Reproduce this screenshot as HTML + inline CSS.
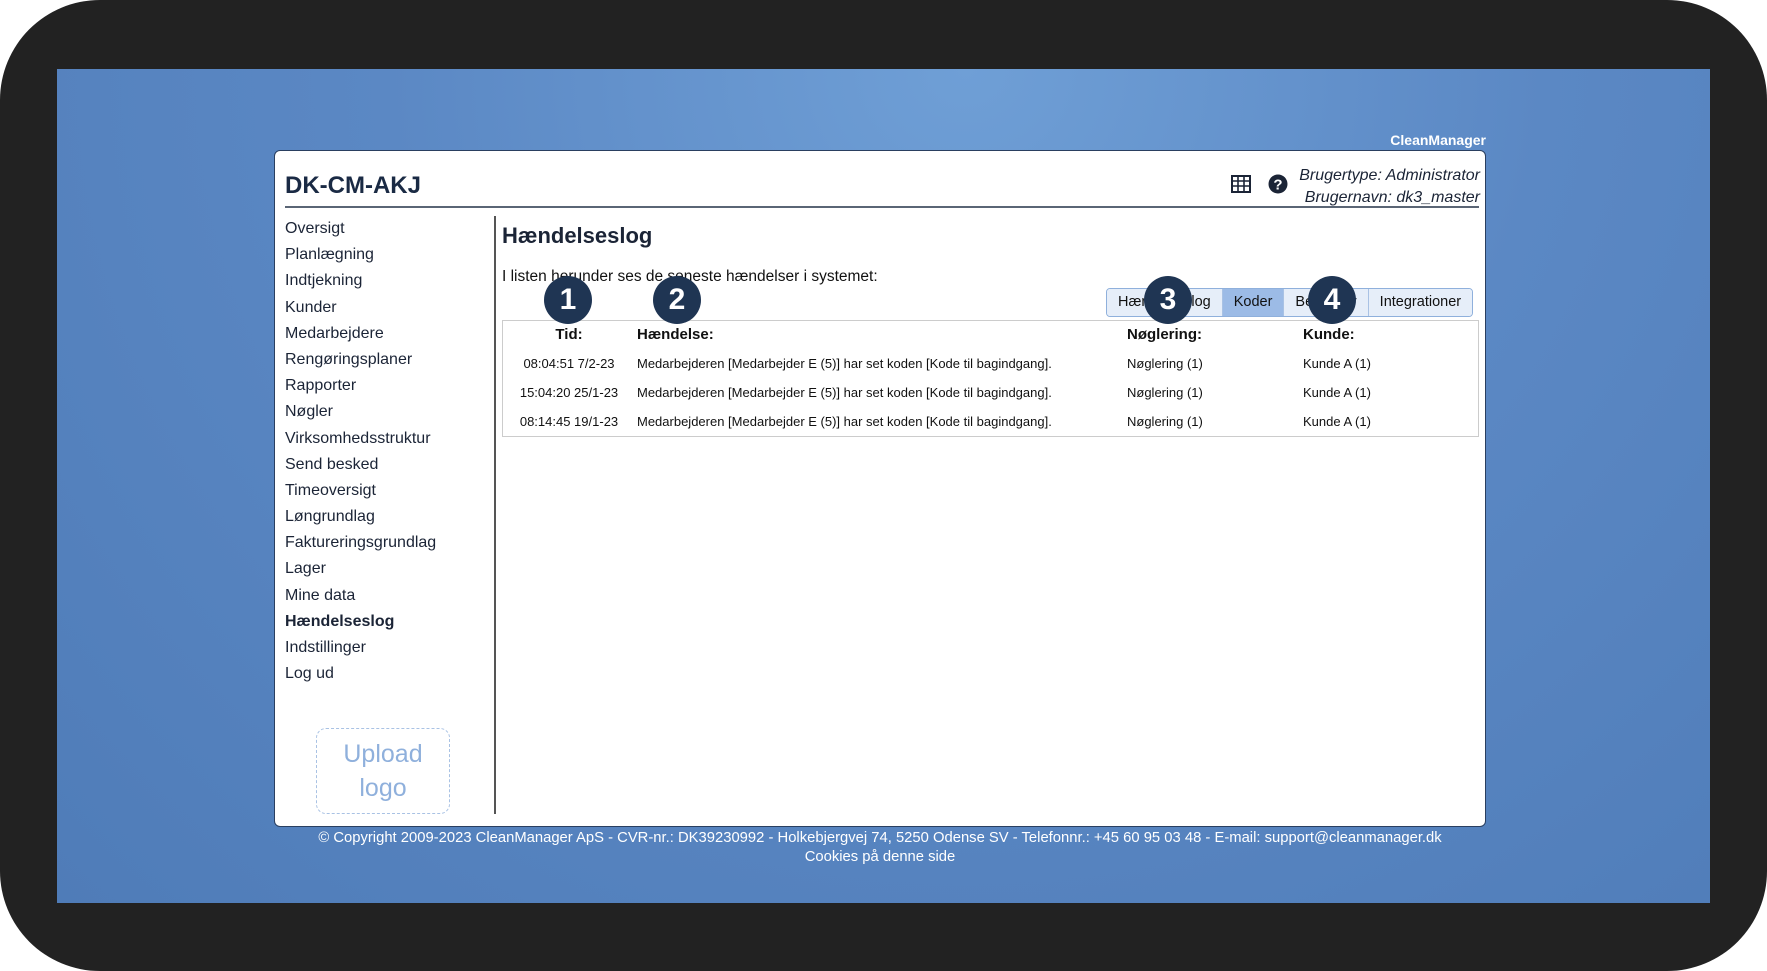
<!DOCTYPE html>
<html><head><meta charset="utf-8"><style>
*{margin:0;padding:0;box-sizing:border-box}
body{width:1767px;height:971px;background:#fff;font-family:"Liberation Sans",sans-serif;position:relative;overflow:hidden}
.frame{position:absolute;left:0;top:0;width:1767px;height:971px;background:#222;border-radius:100px}
.blue{position:absolute;left:57px;top:69px;width:1653px;height:834px;background:radial-gradient(ellipse at 55% 0%,#6f9fd6 0%,#5b88c4 45%,#4f7cb8 100%)}
.a{position:absolute}
.panel{position:absolute;left:274px;top:150px;width:1212px;height:677px;background:#fff;border-radius:6px;border:1px solid #2a3f60}
.nav div{height:26.2px;font-size:16px;color:#1b2436}
.hd{font-weight:bold;font-size:15px;color:#111}
.row{font-size:13px;color:#111}
.badge{position:absolute;width:48px;height:48px;border-radius:50%;background:#1f3553;color:#fff;font-weight:bold;font-size:30px;text-align:center;line-height:48px}
.tabs{position:absolute;left:1106px;top:288px;height:29px;display:flex;border:1px solid #8fb0dc;border-radius:4px;overflow:hidden;font-size:14.5px}
.tabs div{padding:0 11px;line-height:27px;background:#e6eef9;border-right:1px solid #a9c2e4;color:#111}
.tabs div.on{background:#9cbbe6}
</style></head><body>
<div class="frame"></div>
<div class="blue"></div>
<div class="a" style="right:281px;top:132px;color:#fff;font-weight:bold;font-size:14px">CleanManager</div>
<div class="panel"></div>
<div class="a" style="left:285px;top:172px;font-size:24px;font-weight:bold;color:#1a2a44">DK-CM-AKJ</div>
<div class="a" style="left:285px;top:206px;width:1194px;height:2px;background:#5a6575"></div>
<svg class="a" style="left:1231px;top:175px" width="20" height="18" viewBox="0 0 20 18"><rect x="1" y="1" width="18" height="16" fill="none" stroke="#1b2436" stroke-width="2"/><path d="M1 6H19M1 11H19M7 1V17M13 1V17" stroke="#1b2436" stroke-width="1.6"/></svg>
<svg class="a" style="left:1268px;top:174px" width="20" height="20" viewBox="0 0 20 20"><circle cx="10" cy="10" r="9.5" fill="#1b2436"/><text x="10" y="15.5" text-anchor="middle" font-family="Liberation Sans" font-weight="bold" font-size="15" fill="#fff">?</text></svg>
<div class="a" style="right:287px;top:165px;font-style:italic;font-size:16px;text-align:right;line-height:22px;color:#1b2436">Brugertype: Administrator<br>Brugernavn: dk3_master</div>
<div class="a nav" style="left:285px;top:220px">
<div>Oversigt</div><div>Planlægning</div><div>Indtjekning</div><div>Kunder</div><div>Medarbejdere</div><div>Rengøringsplaner</div><div>Rapporter</div><div>Nøgler</div><div>Virksomhedsstruktur</div><div>Send besked</div><div>Timeoversigt</div><div>Løngrundlag</div><div>Faktureringsgrundlag</div><div>Lager</div><div>Mine data</div><div style="font-weight:bold">Hændelseslog</div><div>Indstillinger</div><div>Log ud</div></div>
<div class="a" style="left:494px;top:216px;width:2px;height:598px;background:#555"></div>
<div class="a" style="left:316px;top:728px;width:134px;height:86px;border:1.5px dashed #a9c2e4;border-radius:10px;color:#8fb0dc;font-size:25px;text-align:center;line-height:34px;padding-top:8px">Upload<br>logo</div>
<div class="a" style="left:502px;top:223px;font-size:22px;font-weight:bold;color:#1b2436">Hændelseslog</div>
<div class="a" style="left:502px;top:268px;font-size:15.5px;color:#111">I listen herunder ses de seneste hændelser i systemet:</div>
<div class="tabs"><div>Hændelseslog</div><div class="on">Koder</div><div>Beskeder</div><div style="border-right:0">Integrationer</div></div>
<div class="a" style="left:502px;top:320px;width:977px;height:117px;border:1.5px solid #ccc"></div>
<div class="a hd" style="left:530px;top:326px;width:78px;text-align:center">Tid:</div>
<div class="a hd" style="left:637px;top:326px">Hændelse:</div>
<div class="a hd" style="left:1127px;top:326px">Nøglering:</div>
<div class="a hd" style="left:1303px;top:326px">Kunde:</div>
<div class="a row" style="left:510px;top:349px;width:118px;text-align:center;line-height:29px">08:04:51 7/2-23<br>15:04:20 25/1-23<br>08:14:45 19/1-23</div>
<div class="a row" style="left:637px;top:349px;line-height:29px">Medarbejderen [Medarbejder E (5)] har set koden [Kode til bagindgang].<br>Medarbejderen [Medarbejder E (5)] har set koden [Kode til bagindgang].<br>Medarbejderen [Medarbejder E (5)] har set koden [Kode til bagindgang].</div>
<div class="a row" style="left:1127px;top:349px;line-height:29px">Nøglering (1)<br>Nøglering (1)<br>Nøglering (1)</div>
<div class="a row" style="left:1303px;top:349px;line-height:29px">Kunde A (1)<br>Kunde A (1)<br>Kunde A (1)</div>
<div class="badge" style="left:544px;top:276px">1</div>
<div class="badge" style="left:653px;top:276px">2</div>
<div class="badge" style="left:1144px;top:276px">3</div>
<div class="badge" style="left:1308px;top:276px">4</div>
<div class="a" style="left:274px;width:1212px;top:829px;text-align:center;color:#fff;font-size:14.8px;line-height:19px">© Copyright 2009-2023 CleanManager ApS - CVR-nr.: DK39230992 - Holkebjergvej 74, 5250 Odense SV - Telefonnr.: +45 60 95 03 48 - E-mail: support@cleanmanager.dk<br>Cookies på denne side</div>
</body></html>
